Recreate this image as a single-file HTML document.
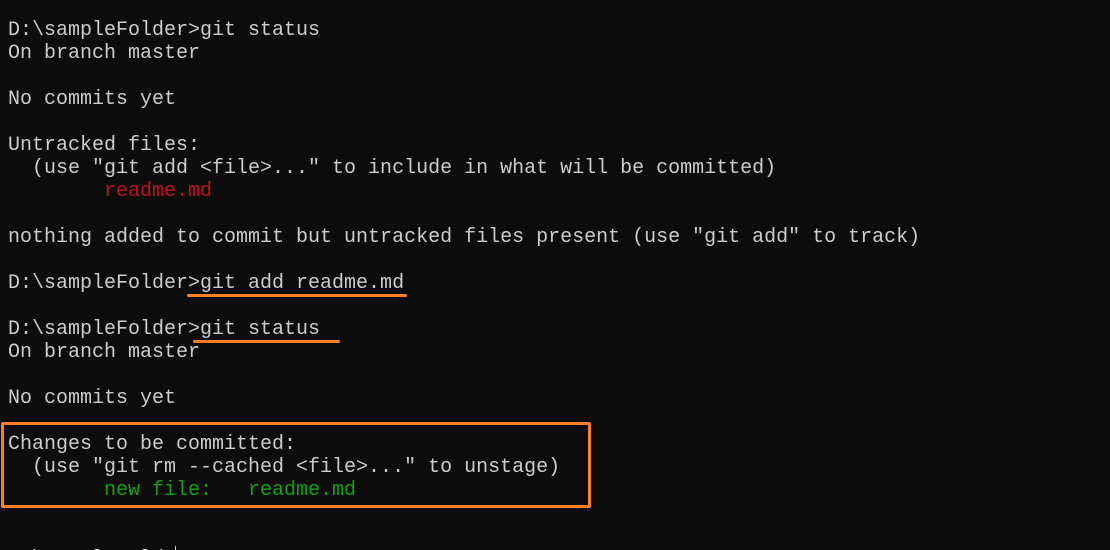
<!DOCTYPE html>
<html><head><style>
html,body{margin:0;padding:0;background:#0c0c0c;width:1110px;height:550px;overflow:hidden;position:relative}
pre{margin:0;position:absolute;left:8px;top:19px;font-family:"Liberation Mono",monospace;font-size:20px;line-height:23px;color:#cccccc}
.r{color:#c50f1f}.g{color:#13a10e}
.u{position:absolute;height:3px;background:#ff7f27;border-radius:2px}
.box{position:absolute;left:1px;top:422px;width:584px;height:80px;border:3px solid #ff7f27;border-radius:2px}
.cur{position:absolute;left:175px;top:546px;width:1px;height:6px;background:#ccc}
</style></head><body>
<pre>D:\sampleFolder&gt;git status
On branch master

No commits yet

Untracked files:
  (use "git add &lt;file&gt;..." to include in what will be committed)
        <span class="r">readme.md</span>

nothing added to commit but untracked files present (use "git add" to track)

D:\sampleFolder&gt;git add readme.md

D:\sampleFolder&gt;git status
On branch master

No commits yet

Changes to be committed:
  (use "git rm --cached &lt;file&gt;..." to unstage)
        <span class="g">new file:   readme.md</span>


D:\sampleFolder&gt;</pre>
<div class="u" style="left:187px;top:294px;width:220px"></div>
<div class="u" style="left:193px;top:340px;width:147px"></div>
<div class="box"></div>
<div class="cur"></div>
</body></html>
